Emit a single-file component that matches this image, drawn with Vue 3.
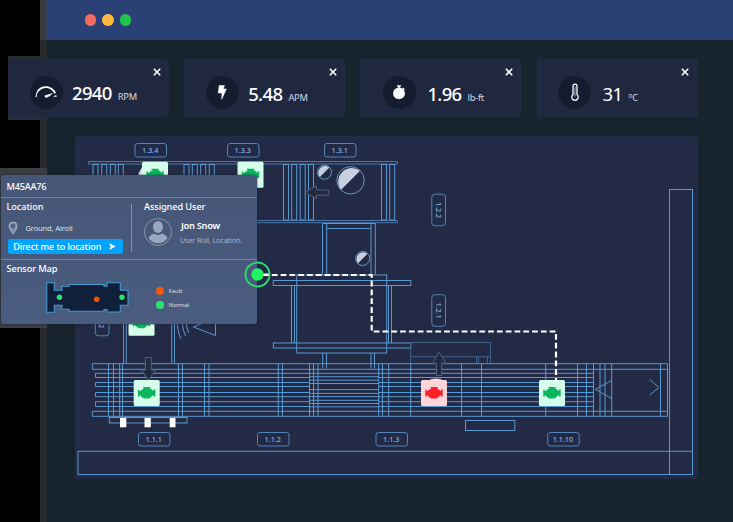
<script setup>
const metrics = [
  { key: 'rpm', value: '2940', unit: 'RPM' },
  { key: 'amp', value: '5.48', unit: 'APM' },
  { key: 'torque', value: '1.96', unit: 'lb-ft' },
  { key: 'temp', value: '31', unit: '°C' },
]

const labels = [
  { t: '1.3.4', x: 135, y: 143.5 },
  { t: '1.3.3', x: 227.5, y: 143.5 },
  { t: '1.3.1', x: 324.5, y: 143.5 },
  { t: '1.1.1', x: 138.5, y: 432.5 },
  { t: '1.1.2', x: 257.5, y: 432.5 },
  { t: '1.1.3', x: 376, y: 432.5 },
  { t: '1.1.10', x: 547.7, y: 432.5 },
]

const sideLabels = [
  { t: '1.2.2', x: 438.5, y: 210 },
  { t: '1.2.1', x: 438.5, y: 310.5 },
  { t: '1.2.2', x: 102, y: 320 },
]

const sensors = [
  { x: 142, y: 161.7, fault: false },
  { x: 237.5, y: 161.7, fault: false },
  { x: 128.5, y: 309.7, fault: false },
  { x: 133.7, y: 380, fault: false },
  { x: 421, y: 380, fault: true },
  { x: 539, y: 380, fault: false },
]

// Rails of the main conveyor
const outerRails = [363.7, 369.3, 411.3, 416.3]
const innerRails = [373.3, 377.5, 382.5, 386.5, 392.5, 396.7, 401.7, 406.5]
const midRails = [373.3, 376.7, 380.2, 383.5, 389.6, 393.4, 396.6, 400.3, 403.5, 406.8]
const posts = [
  108.5, 113.5, 119.7, 122.5, 178.5, 182.5, 204.5, 209, 278.3, 282.5, 309.5, 313.5, 318,
  378.7, 382.5, 388.7, 410.7, 461.5, 481.5, 545.7, 577.5, 586.5, 593.5, 600, 605, 611.7, 660.5,
]
const slats = [93, 101.7, 110.3, 118.3, 184, 192.3, 200.7, 209.3]
const tallSlats = [283.5, 291.7, 300.2, 308.5, 381.5, 389.7]
</script>

<template>
  <div class="stage">
    <div class="backplate"></div>
    <div class="window">
      <header class="titlebar">
        <span class="dot red"></span><span class="dot amber"></span><span class="dot lime"></span>
      </header>

      <main class="body">
        <section class="metrics">
          <article v-for="m in metrics" :key="m.key" class="card" :class="m.key">
            <span class="badge">
              <svg v-if="m.key === 'rpm'" width="24" height="16" viewBox="0 0 24 16">
                <path d="M2.2 13A9.5 9.3 0 0 1 4.4 6.4" fill="none" stroke="#fff" stroke-width="1.2" />
                <path d="M4 7A9.6 8 0 0 1 13.5 3.2Q18.5 4.4 21.3 9.2" fill="none" stroke="#fff" stroke-width="1.8" />
                <path d="M10.3 11.7 19.3 8.8Q16.2 12.2 12.7 13.7Q10.5 13.6 10.3 11.7Z" fill="#fff" />
                <path d="M19.6 12.3l2.6-1.2.5 1.6h-3z" fill="#fff" />
              </svg>
              <svg v-else-if="m.key === 'amp'" width="10" height="15" viewBox="0 0 10 15">
                <path d="M2.2.5H7.4L6.4 4H9.4L4.7 14.2 5 8H1.2Z" fill="#fff" stroke="#fff" stroke-width=".5" />
              </svg>
              <svg v-else-if="m.key === 'torque'" width="14" height="16" viewBox="0 0 14 16">
                <path d="M5.1 1.2h3.8v1.6H8v1H6v-1h-.9z" fill="#fff" />
                <circle cx="7" cy="9.4" r="5.9" fill="#fff" />
                <path d="M11.1 3.6l1.7 1.6-1 1-1.6-1.6z" fill="#fff" />
              </svg>
              <svg v-else width="10" height="19" viewBox="0 0 10 19">
                <path d="M3 3.2a2 2 0 0 1 4 0V11.6a3.2 3.2 0 1 1-4 0Z" fill="none" stroke="#fff" stroke-width="1.3" />
                <path d="M5 3.5V13.5" stroke="#b5bccb" stroke-width=".9" />
              </svg>
            </span>
            <span class="value">{{ m.value }}</span>
            <span v-if="m.key === 'temp'" class="unit"><span class="degree">o</span>C</span>
            <span v-else class="unit">{{ m.unit }}</span>
            <svg class="close" width="8" height="8" viewBox="0 0 8 8">
              <path d="M.8.8 7.2 7.2M7.2.8.8 7.2" stroke="#fff" stroke-width="1.6" />
            </svg>
          </article>
        </section>

        <section class="panel">
          <svg class="plan" width="623" height="343" viewBox="75 136 623 343">
            <g class="line">
              <!-- Site frame -->
              <rect x="78" y="451.3" width="614.5" height="23.2" />
              <rect x="669.5" y="189.5" width="23" height="285" />

              <!-- Upper conveyor -->
              <path class="soft" d="M88.5 164V161.5H397.5V164H88.5M200 220.5H397.5V222.7H200" />
              <rect v-for="x in slats" :key="'s' + x" :x="x" y="164.5" width="5" height="30" />
              <rect v-for="x in tallSlats" :key="'t' + x" :x="x" y="164.5" width="5" height="55.5" />

              <!-- Connector -->
              <path d="M322.5 275V223.5H375.3V275M326.7 223.5V275M371 223.5V275M326.7 228.5H371" />

              <!-- Central machine -->
              <rect x="296.7" y="275" width="90" height="78" />
              <rect x="273.3" y="280.5" width="137.5" height="5" />
              <rect x="273.3" y="343" width="137.5" height="5" />
              <path d="M291.5 285.5V343M294.5 285.5V343M388.5 285.5V343M391.5 285.5V343" />
              <path d="M322.7 353V368.5M326.5 353V368.5M371 353V368.5M374.5 353V368.5" />

              <!-- Left shaft -->
              <path d="M123.5 315V363.5M126.3 315V363.5M171.7 315V363.5M174.5 315V363.5" />
              <path d="M177 320Q177.5 332 181 339M182 320Q182.5 330 185.5 336M186 320Q186.5 328 188.5 333" />
              <path d="M215.5 316V335.5L193.5 327L215.5 318" />

              <!-- Main conveyor -->
              <path d="M92.3 363.7V369.3M92.3 411.3V416.3M95.5 373.3V377.5M95.5 382.5V386.5M95.5 392.5V396.7M95.5 401.7V406.5" />
              <path v-for="y in outerRails" :key="'o' + y" :d="`M92.3 ${y}H667.5`" />
              <path v-for="y in innerRails" :key="'i' + y" :d="`M95.5 ${y}H309.5M378.7 ${y}H593.5`" />
              <path v-for="y in midRails" :key="'m' + y" :d="`M309.5 ${y}H378.7`" />
              <path v-for="x in posts" :key="'p' + x" :d="`M${x} 363.7V416.3`" />
              <path d="M667.5 363.7V416.3M611.7 380.5L595.3 389.3L611.7 398.5M649.5 379.3L659 387.5L649.5 395" />

              <!-- Feet and auxiliary boxes -->
              <rect x="109.3" y="417.5" width="77.7" height="5.5" />
              <rect x="465.5" y="420.5" width="49.3" height="10" />
              <path class="faint" d="M410.7 342.5H490.5V363.5M410.7 356.7H490.5M476.5 356.7V363.5M478.5 356.7V363.5M487.5 356.7V363.5M410.7 342.5V363.5" />
            </g>

            <g fill="#fff">
              <rect x="120" y="418" width="6.3" height="9.3" />
              <rect x="144.5" y="418" width="6.3" height="9.3" />
              <rect x="169.7" y="418" width="5.8" height="9.3" />
            </g>

            <!-- Flow arrows -->
            <g class="arrow">
              <path d="M305 192.3L316.5 186V190H328.7V195.2H316.5V198.7Z" />
              <path d="M145.5 357.5H151.3V370H155.3L148.5 380.5L141.5 370H145.5Z" />
              <path d="M439 352L446 363.3H441.7V375.5H436.5V363.3H432.5Z" />
            </g>

            <!-- Rollers -->
            <g v-for="r in [[324.5, 172.3, 7], [350.5, 180.3, 13.7], [362.7, 258.5, 7]]" :key="r[0]"
               :transform="`translate(${r[0]} ${r[1]}) scale(${r[2]})`">
              <path d="M-.7.7A1 1 0 0 1 .7-.7Z" fill="#c6d0de" />
              <circle r="1" class="roller" />
            </g>

            <g v-for="l in labels" :key="l.t" class="tag">
              <rect :x="l.x" :y="l.y" width="31.5" height="13.5" rx="2.5" />
              <text :x="l.x + 15.2" :y="l.y + 9.6">{{ l.t }}</text>
            </g>
            <g v-for="l in sideLabels" :key="l.t + l.y" class="tag"
               :transform="`translate(${l.x} ${l.y}) rotate(90)`">
              <rect x="-15.8" y="-7" width="31.6" height="13.7" rx="3" />
              <text x="0" y="2.8">{{ l.t }}</text>
            </g>

            <path d="M138 174.5L142.5 166V176Z" fill="#d3dfe9" />
            <ellipse cx="436" cy="380" rx="6" ry="1.5" fill="#c9e6ff" />
            <path class="route" d="M263 275H371.7V331.5H556V381" />

            <g v-for="s in sensors" :key="s.x + '-' + s.y" :transform="`translate(${s.x} ${s.y})`"
               :class="s.fault ? 'fault' : 'normal'">
              <rect class="tile" width="26" height="26" rx="1.5" />
              <path class="engine"
                d="M9.5 7H16.7V8.2H15.7L18 9.4 19.3 10.7H20V9.6H21.7V16.4H20V15.5H18.8L16.8 17.8 15 18.5H10.5L8.5 17.5 6.8 15.6H5.7V16.6H4.3V9.8H5.7V11H6.8L8.8 9.2 11 8.2H9.5Z" />
            </g>
          </svg>
        </section>
      </main>
    </div>

    <aside class="popup">
      <div class="row head">M45AA76</div>
      <div class="row details">
        <div class="location">
          <h3>Location</h3>
          <p class="place">
            <svg width="10" height="14" viewBox="0 0 10 14">
              <path d="M5 13Q1 8 1 5a4 4 0 0 1 8 0Q9 8 5 13Z" fill="#7f8ca6" stroke="#a9b3c6" stroke-width="1" />
              <circle cx="5" cy="5" r="2.1" fill="#4a5b7e" />
            </svg>
            <span>Ground, Airoli</span>
          </p>
          <button class="go">
            <span>Direct me to location</span>
            <svg width="7" height="7" viewBox="0 0 7 7"><path d="M.3.3 6.8 3.5.3 6.7 1.6 3.5Z" fill="#fff" /></svg>
          </button>
        </div>
        <div class="user">
          <h3>Assigned User</h3>
          <div class="person">
            <svg width="28" height="28" viewBox="0 0 28 28">
              <circle cx="14" cy="14" r="13.5" fill="none" stroke="#98a4bb" stroke-width=".8" />
              <ellipse cx="14" cy="9" rx="5" ry="6" fill="#9aa7c0" />
              <path d="M4.5 20Q6 16.5 10.2 15.5Q14 18.6 17.8 15.5Q22 16.5 23.5 20Q20 25.3 14 25.3Q8 25.3 4.5 20Z" fill="#9aa7c0" />
            </svg>
            <div class="who"><strong>Jon Snow</strong><span>User Roll, Location.</span></div>
          </div>
        </div>
      </div>
      <div class="sensor">
        <h3>Sensor Map</h3>
        <div class="map">
          <svg width="83" height="31" viewBox="0 0 83 31">
            <path class="hull"
              d="M.7.7H8.3V8.3H16V4.3H23V2.5H58V4.3H61V.7H74.3V8.3H82V23.3H74.3V30H61V27.5H58V29.3H23V27.3H16V23.3H8.3V30.3H.7Z" />
            <circle cx="13.5" cy="15.3" r="2.7" fill="#25e66b" />
            <circle cx="50.7" cy="17.2" r="2.8" fill="#e8530e" />
            <circle cx="76" cy="15.3" r="2.7" fill="#25e66b" />
          </svg>
          <ul class="legend">
            <li><i class="bad"></i>Fault</li>
            <li><i class="good"></i>Normal</li>
          </ul>
        </div>
      </div>
      <svg class="beacon" width="27" height="27" viewBox="0 0 27 27">
        <circle cx="13.5" cy="13.5" r="12" fill="none" stroke="#2bdc6c" stroke-width="1.9" />
        <circle cx="13.5" cy="13.5" r="6.2" fill="#1ff55f" />
        <path d="M19.5 13.5h5" stroke="#fff" stroke-width="2" />
      </svg>
    </aside>
  </div>
</template>

<style>
body { margin: 0; background: #000; }
</style>

<style scoped>
* { box-sizing: border-box; }
.stage {
  position: relative;
  width: 733px;
  height: 522px;
  overflow: hidden;
  background: #000;
  font-family: "Noto Sans", "Open Sans", sans-serif;
  color: #fff;
}
.window {
  display: flex;
  flex-direction: column;
  height: 522px;
  margin-left: 40px;
  background: linear-gradient(90deg, #292b2c 0 6px, #17242e 7px);
}
.titlebar {
  display: flex;
  align-items: center;
  gap: 6px;
  flex: 0 0 40px;
  padding-left: 44.5px;
  background: linear-gradient(90deg, #3b3b3f 0 5px, #2b4074 8px);
}
.dot { width: 11.6px; height: 11.6px; border-radius: 50%; }
.red { background: #f46c5e; }
.amber { background: #ffb941; }
.lime { background: #20c64d; }

.body { flex: 1; padding-top: 19px; }
.metrics {
  display: grid;
  grid-template-columns: repeat(4, 161px);
  column-gap: 15.2px;
  margin-left: -32px;
}
.card {
  position: relative;
  isolation: isolate;
  display: flex;
  align-items: baseline;
  height: 58px;
  padding: 0 0 0 21.5px;
  border-radius: 3px;
  background: #20283f;
  box-shadow: inset 0 0 0 1px #1f2c3f;
}
.rpm { box-shadow: none; border-radius: 0 3px 3px 0; }
.rpm::before {
  content: "";
  position: absolute;
  z-index: -1;
  top: -3px;
  left: 0;
  width: 39px;
  height: 64px;
  background: linear-gradient(#252d2f 0 3px, #20283f 3px 61px, #222f3d 61px);
}
.badge {
  display: flex;
  align-items: center;
  justify-content: center;
  align-self: center;
  flex: 0 0 33px;
  height: 33px;
  margin-top: 8px;
  border-radius: 50%;
  background: #141d30;
}
.value {
  margin: 21px 0 0 9.5px;
  font-size: 18.5px;
  line-height: 27px;
  font-weight: 500;
  letter-spacing: -.65px;
}
.unit { margin-left: 6px; font-size: 9.3px; line-height: 12px; color: #d6dae5; letter-spacing: -.25px; }
.degree { position: relative; top: -3.5px; font-size: 6.5px; }
.rpm .value { margin-top: 19.5px; }
.torque .value, .temp .value { margin-left: 11.5px; }
.torque { padding-left: 22.5px; }
.temp .value { font-weight: 400; }
.close { position: absolute; top: 9px; right: 8.5px; }
.rpm .close { right: 8px; }

.panel {
  width: 623px;
  height: 343px;
  margin: 19px 0 0 35px;
  border-radius: 3px;
  background: #222a45;
  box-shadow: 0 0 2px #1d2940;
}
.plan { display: block; }
.line { fill: none; stroke: #5a98d0; stroke-width: 1; }
.soft { stroke: #4a78a8; }
.faint { stroke: #3f628d; }
.arrow { fill: #232a3e; stroke: #4c698d; stroke-width: .9; }
.roller { fill: none; stroke: #6399c6; stroke-width: 1; vector-effect: non-scaling-stroke; }
.tag rect { fill: #222a45; stroke: #568abf; stroke-width: .95; }
.tag text { fill: #82b4ec; font-size: 7.2px; font-weight: 500; text-anchor: middle; }
.route { fill: none; stroke: #fff; stroke-width: 2.2; stroke-dasharray: 5.8 3; }
.tile { fill: #d5ffea; }
.engine { fill: #09b65b; }
.fault .tile { fill: #ffd5da; }
.fault .engine { fill: #ff1e27; }

.backplate { position: absolute; top: 168px; left: 0; width: 47px; height: 160px; background: #3b3d43; }
.popup {
  position: absolute;
  top: 175px;
  left: 1px;
  width: 256px;
  height: 149px;
  border-radius: 3px;
  background: linear-gradient(#455677, #4a5c7f);
  box-shadow: 0 0 2px #101a2c;
}
.row { border-bottom: 1px solid #7182a0; }
.head { height: 23px; padding-left: 5.5px; font-size: 9.2px; line-height: 23px; font-weight: 500; letter-spacing: -.25px; }
h3 { margin: 0; font-size: 9.2px; line-height: 12px; font-weight: 500; letter-spacing: -.1px; }
.details { display: flex; height: 62px; }
.location { width: 125px; padding: 3px 0 0 5.5px; }
.place { display: flex; align-items: center; gap: 7.5px; height: 14px; margin: 8px 0 0 1.5px; font-size: 7.6px; color: #dde2ec; letter-spacing: -.18px; }
.go {
  display: flex;
  align-items: center;
  gap: 8px;
  width: 115px;
  height: 15px;
  margin: 4px 0 0 1.7px;
  padding: 0 0 0 5px;
  border: 0;
  border-radius: 2px;
  background: #00a4ff;
  color: #fff;
  font: 500 9.1px/15px "Noto Sans", sans-serif;
  letter-spacing: -.13px;
  white-space: nowrap;
}
.user { position: relative; flex: 1; padding: 3px 0 0 18px; }
.user::before { content: ""; position: absolute; left: 5px; top: 6px; width: 1px; height: 48px; background: #8491ab; }
.person { display: flex; gap: 9px; margin-top: 5px; }
.who { display: flex; flex-direction: column; padding-top: 1px; white-space: nowrap; }
.who strong { font-size: 9.3px; line-height: 14px; font-weight: 600; letter-spacing: -.3px; }
.who span { margin-left: -1px; font-size: 7.2px; line-height: 14px; letter-spacing: -.13px; color: #a9b4c9; }
.sensor { padding: 3px 0 0 5.5px; }
.map { display: flex; margin: 7px 0 0 39px; }
.hull { fill: #10203a; stroke: #479bd0; stroke-width: 1.1; }
.legend { margin: 2px 0 0 27.8px; padding: 0; list-style: none; font-size: 5.8px; line-height: 14px; color: #dce1ea; }
.legend li { display: flex; align-items: center; gap: 4.5px; height: 14px; }
.legend i { width: 8px; height: 8px; border-radius: 50%; }
.bad { background: #ef5b0c; }
.good { background: #2de371; }
.beacon { position: absolute; left: 242.5px; top: 86px; }
</style>
